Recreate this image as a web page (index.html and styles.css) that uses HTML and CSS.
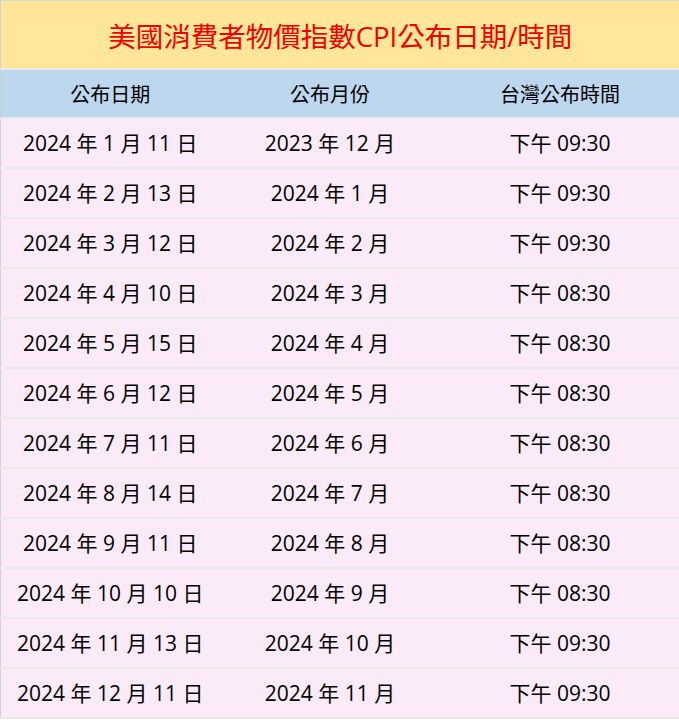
FILE: index.html
```html
<!DOCTYPE html>
<html lang="zh-Hant">
<head>
<meta charset="utf-8">
<title>美國消費者物價指數CPI公布日期/時間</title>
<link rel="stylesheet" href="styles.css">
</head>
<body>
<table class="cpi">
  <colgroup>
    <col class="c1"><col class="c2"><col class="c3">
  </colgroup>
  <thead>
    <tr class="title-row"><th colspan="3">美國消費者物價指數CPI公布日期/時間</th></tr>
    <tr class="head-row"><th>公布日期</th><th>公布月份</th><th>台灣公布時間</th></tr>
  </thead>
  <tbody>
    <tr><td>2024 年 1 月 11 日</td><td>2023 年 12 月</td><td>下午 09:30</td></tr>
    <tr><td>2024 年 2 月 13 日</td><td>2024 年 1 月</td><td>下午 09:30</td></tr>
    <tr><td>2024 年 3 月 12 日</td><td>2024 年 2 月</td><td>下午 09:30</td></tr>
    <tr><td>2024 年 4 月 10 日</td><td>2024 年 3 月</td><td>下午 08:30</td></tr>
    <tr><td>2024 年 5 月 15 日</td><td>2024 年 4 月</td><td>下午 08:30</td></tr>
    <tr><td>2024 年 6 月 12 日</td><td>2024 年 5 月</td><td>下午 08:30</td></tr>
    <tr><td>2024 年 7 月 11 日</td><td>2024 年 6 月</td><td>下午 08:30</td></tr>
    <tr><td>2024 年 8 月 14 日</td><td>2024 年 7 月</td><td>下午 08:30</td></tr>
    <tr><td>2024 年 9 月 11 日</td><td>2024 年 8 月</td><td>下午 08:30</td></tr>
    <tr><td>2024 年 10 月 10 日</td><td>2024 年 9 月</td><td>下午 08:30</td></tr>
    <tr><td>2024 年 11 月 13 日</td><td>2024 年 10 月</td><td>下午 09:30</td></tr>
    <tr><td>2024 年 12 月 11 日</td><td>2024 年 11 月</td><td>下午 09:30</td></tr>
  </tbody>
</table>
</body>
</html>
```
FILE: styles.css
```css
html, body {
  margin: 0;
  padding: 0;
  background: #ffffff;
}
body {
  font-family: "Open Sans", "Noto Sans CJK TC", sans-serif;
}
.cpi {
  width: 679px;
  border-collapse: collapse;
  table-layout: fixed;
  border-top: 1px solid #d6d6d6;
  border-left: 1px solid #d0d0d0;
}
.c1 { width: 219px; }
.c2 { width: 221px; }
.c3 { width: 239px; }
.cpi th, .cpi td {
  padding: 0;
  text-align: center;
  vertical-align: middle;
  font-weight: normal;
  color: #000;
}
.title-row th {
  height: 67px;
  background: #ffe699;
  color: #f20000;
  font-size: 27.5px;
  border-bottom: 2px solid #e9e9e9;
}
.head-row th {
  height: 47px;
  background: #bdd7ee;
  font-size: 20px;
  border-bottom: 2px solid #e9e9e9;
}
.cpi td {
  height: 46px;
  padding-bottom: 2px;
  background: #fbebf8;
  font-size: 21px;
  border-bottom: 2px solid #e9e9e9;
}
```
